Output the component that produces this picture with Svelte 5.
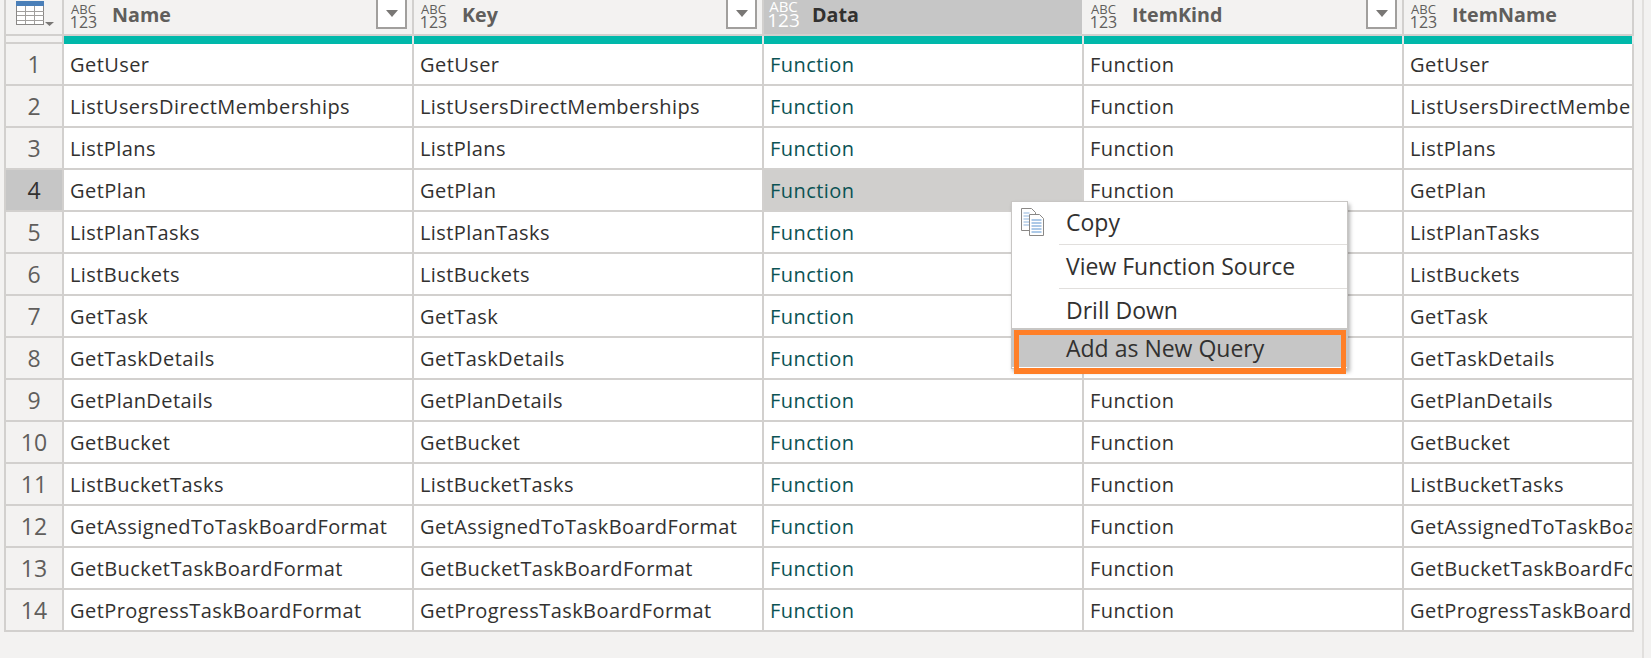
<script>
  const names = [
    'GetUser', 'ListUsersDirectMemberships', 'ListPlans', 'GetPlan', 'ListPlanTasks',
    'ListBuckets', 'GetTask', 'GetTaskDetails', 'GetPlanDetails', 'GetBucket',
    'ListBucketTasks', 'GetAssignedToTaskBoardFormat', 'GetBucketTaskBoardFormat', 'GetProgressTaskBoardFormat'
  ];
  const columns = [
    { label: 'Name', filter: true },
    { label: 'Key', filter: true },
    { label: 'Data', active: true },
    { label: 'ItemKind', filter: true },
    { label: 'ItemName' }
  ];
</script>

<div class="page">
  <div class="table">
    <div class="row head">
      <div class="corner">
        <svg width="40" height="28" viewBox="0 0 40 28">
          <rect x="0.5" y="1.5" width="27" height="23" fill="#fff" stroke="#8a8886"/>
          <rect x="0" y="1" width="28" height="5" fill="#4a7fb8"/>
          <path d="M1 11.5h27M1 15.5h27M1 20.5h27M9.5 6v18M18.5 6v18" stroke="#a19f9d" fill="none"/>
          <path d="M29 22h9l-4.5 4z" fill="#797775"/>
        </svg>
      </div>
      {#each columns as c}
        <div class="hcell" class:active={c.active}>
          <span class="type"><span class="abc">ABC</span><span class="num">123</span></span>
          <span class="hlabel">{c.label}</span>
          {#if c.filter}
            <span class="filter"><svg width="12" height="7" viewBox="0 0 12 7"><path d="M0 0h12L6 7z" fill="#797775"/></svg></span>
          {/if}
        </div>
      {/each}
    </div>
    <div class="row quality">
      <div class="qcorner"></div>
      {#each columns as c}<div class="bar"></div>{/each}
    </div>
    {#each names as name, i}
      <div class="row body">
        <div class="idx" class:sel={i === 3}>{i + 1}</div>
        <div class="cell">{name}</div>
        <div class="cell">{name}</div>
        <div class="cell fn" class:sel={i === 3}>Function</div>
        <div class="cell">Function</div>
        <div class="cell">{name}</div>
      </div>
    {/each}
  </div>
  <div class="rail"></div>

  <div class="menu">
    <svg class="copy" width="26" height="30" viewBox="0 0 26 30">
      <path d="M1.5 1.5h10l4 4v18h-14z" fill="#fff" stroke="#8a8886"/>
      <path d="M3.5 6h6M3.5 9h9M3.5 12h9M3.5 15h9M3.5 18h9" stroke="#8fb4dc"/>
      <path d="M9.5 7.5h10l4 4v17h-14z" fill="#fff" stroke="#8a8886"/>
      <path d="M11.5 13h10M11.5 16h10M11.5 19h10M11.5 22h10M11.5 25h10" stroke="#5b93cf"/>
    </svg>
    <div class="item copy-item">Copy</div>
    <div class="item view-item">View Function Source</div>
    <div class="item drill-item">Drill Down</div>
    <div class="item hot">Add as New Query</div>
    <div class="mark"></div>
  </div>
</div>

<style>
  :global(body) {
    margin: 0;
    background: #f3f2f1;
  }
  .page {
    position: relative;
    display: flex;
    width: 1651px;
    height: 658px;
    overflow: hidden;
    padding-left: 4px;
    box-sizing: border-box;
    font-family: "Open Sans", "Noto Sans", sans-serif;
    color: #323130;
  }
  .table {
    flex: none;
    align-self: flex-start;
    width: 1628px;
    overflow: hidden;
    border-left: 2px solid #d2d0ce;
  }
  .rail {
    flex: none;
    width: 2px;
    margin-left: 8px;
    background: #e1dfdd;
  }
  .row {
    display: grid;
    grid-template-columns: 58px 350px 350px 320px 320px 230px;
  }
  .head { height: 34px; border-bottom: 2px solid #d2d0ce; }
  .corner, .hcell, .idx, .cell, .qcorner, .bar {
    box-sizing: border-box;
    border-right: 2px solid #d2d0ce;
    min-width: 0;
  }
  .corner { padding-left: 10px; }
  .corner svg { display: block; }
  .hcell {
    display: flex;
    align-items: center;
    padding-left: 6px;
    position: relative;
    height: 34px;
    background: #f3f2f1;
  }
  .hcell.active { background: #c6c6c6; border-right-color: #f3f2f1; }
  .type {
    display: flex;
    flex-direction: column;
    align-items: center;
    width: 27px;
    color: #605e5c;
    line-height: 1;
    margin-top: -5px;
  }
  .abc { font-size: 13px; height: 11px; }
  .num { font-size: 16px; height: 13px; }
  .active .type { color: #fff; }
  .active .abc { font-size: 15px; height: 12px; margin-top: -4px; }
  .active .num { font-size: 19px; height: 15px; }
  .hlabel {
    margin-left: 15px;
    font-size: 19.7px;
    font-weight: 700;
    color: #605e5c;
    margin-top: -5px;
  }
  .active .hlabel { color: #323130; }
  .filter {
    position: absolute;
    right: 5px;
    top: -2px;
    width: 31px;
    height: 31px;
    box-sizing: border-box;
    border: 2px solid #a19f9d;
    background: #fff;
    display: flex;
    align-items: center;
    justify-content: center;
  }
  .quality { height: 8px; }
  .qcorner { background: #f3f2f1; border-bottom: 2px solid #d2d0ce; }
  .bar { background: #00b8aa; border-right-color: #e6e6e6; }
  .body { height: 42px; }
  .idx, .cell {
    height: 42px;
    border-bottom: 2px solid #d2d0ce;
    display: flex;
    align-items: center;
    white-space: nowrap;
    overflow: hidden;
  }
  .idx {
    background: #f3f2f1;
    justify-content: center;
    font-size: 23px;
    color: #605e5c;
  }
  .idx.sel { background: #c6c6c6; color: #323130; }
  .cell {
    background: #fff;
    padding-left: 6px;
    font-size: 20px;
    letter-spacing: 0.43px;
  }
  .fn { color: #0b5354; }
  .fn.sel { background: #d0cfcd; }
  .menu {
    position: absolute;
    left: 1011px;
    top: 201px;
    width: 337px;
    height: 168px;
    box-sizing: border-box;
    background: #fff;
    border: 1px solid #c8c6c4;
    box-shadow: 2px 3px 4px rgba(0, 0, 0, 0.3);
    display: flex;
    flex-direction: column;
  }
  .item {
    position: relative;
    box-sizing: border-box;
    padding-left: 54px;
    font-size: 23px;
    white-space: nowrap;
  }
  .copy-item, .view-item {
    border-image: linear-gradient(to right, transparent 48px, #e1dfdd 48px) 1;
    border-bottom: 1px solid;
  }
  .copy-item { height: 43px; line-height: 40px; }
  .view-item { height: 44px; line-height: 42px; }
  .drill-item { height: 39px; line-height: 42px; }
  .copy { position: absolute; left: 8px; top: 5px; }
  .hot {
    flex: 1;
    line-height: 38px;
    background: #c6c6c6;
    border-top: 1px solid #c8c6c4;
    border-bottom: 1px solid #fff;
  }
  .mark {
    position: absolute;
    left: 2px;
    right: 1px;
    top: 128px;
    height: 44px;
    box-sizing: border-box;
    border: solid #ff7f27;
    border-width: 5px 5px 6px;
  }
</style>
